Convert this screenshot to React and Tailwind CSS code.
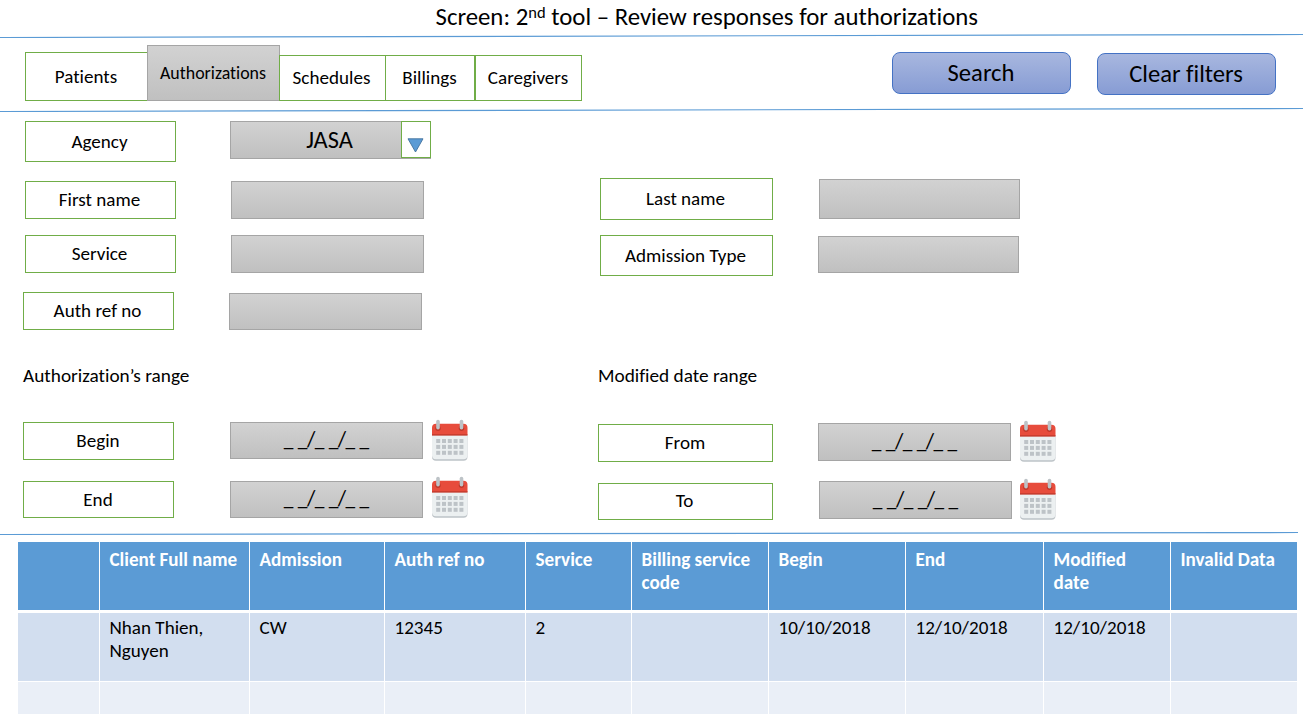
import React from 'react';

const Rule = ({ end = 1303, drop = 3 }) => (
  <svg className="block h-1 w-full shrink-0" viewBox="0 0 1303 4">
    <line x1="0" y1={0.5 + drop} x2={end} y2="0.5" stroke="#5b9bd5" strokeWidth="1.2" />
  </svg>
);

const Label = ({ className, children }) => (
  <div className={`flex items-center justify-center border border-[#70ad47] bg-white pb-px ${className}`}>{children}</div>
);

const Field = ({ className, children }) => (
  <div
    className={`flex items-center justify-center border border-[#a5a5a5] bg-linear-to-b from-[#d2d2d2] to-[#c0c0c0] ${className}`}
  >
    {children}
  </div>
);

const Slash = () => <span className="-mx-[0.5px] text-[21.5px] leading-none">/</span>;

const DateField = ({ className }) => (
  <Field className={className}>
    <span className="whitespace-pre text-[19.3px]">
      _ _<Slash />_ _<Slash />_ _
    </span>
  </Field>
);

const Calendar = ({ className }) => (
  <svg className={`block h-[42px] w-9 ${className}`} viewBox="0 0 36 42">
    <g transform="translate(0 0.5)">
      <path d="M0 16h35.500v21.300a4 4 0 0 1-4 4H4a4 4 0 0 1-4-4z" fill="#bdc3c7" />
      <path d="M0 16h35.500v19.700a4 4 0 0 1-4 4H4a4 4 0 0 1-4-4z" fill="#ecf0f1" />
      <path d="M0 15.800V8.300a4 4 0 0 1 4-4h27.500a4 4 0 0 1 4 4v7.500z" fill="#e74c3c" />
      <path d="M0 14.800h35.500v1.200H0z" fill="#c0392b" />
      <circle cx="6" cy="8.700" r="2.700" fill="#c0392b" />
      <circle cx="29.500" cy="8.700" r="2.700" fill="#c0392b" />
      <rect x="4.200" y="0.300" width="3.600" height="9.700" rx="1.800" fill="#bdc3c7" />
      <rect x="27.700" y="0.300" width="3.600" height="9.700" rx="1.800" fill="#bdc3c7" />
      {[19.5, 25.4, 31.3].map((y) =>
        [4.2, 10, 15.8, 21.6, 27.4].map((x) => (
          <rect key={`${x}-${y}`} x={x} y={y} width="4" height="4" fill="#bdc3c7" />
        ))
      )}
    </g>
  </svg>
);

const ActionButton = ({ className, children }) => (
  <button
    className={`flex h-[42px] w-[179px] items-center justify-center rounded-lg border border-[#4472c4] bg-linear-to-b from-[#a8b7df] to-[#879cd4] pr-px text-[24.6px] ${className}`}
  >
    {children}
  </button>
);

const headers = ['', 'Client Full name', 'Admission', 'Auth ref no', 'Service', 'Billing service code', 'Begin', 'End', 'Modified date', 'Invalid Data'];
const record = ['', 'Nhan Thien, Nguyen', 'CW', '12345', '2', '', '10/10/2018', '12/10/2018', '12/10/2018', ''];
const columns = 'grid grid-cols-[81px_149px_134px_140px_105px_136px_136px_137px_126px_126px] gap-x-px';

export default function App() {
  return (
    <div className="flex h-[725px] w-[1303px] flex-col overflow-hidden bg-white font-['Carlito','Calibri','Lato',sans-serif] text-[19.1px] leading-[23px] text-black [font-variant-ligatures:none]">
      <h1 className="h-[34px] shrink-0 pl-[435.500px] whitespace-nowrap text-[24.8px] leading-[34px]">
        Screen: 2<sup className="top-[-7px] text-[16.5px] leading-none">nd</sup> tool – Review responses for authorizations
      </h1>
      <Rule />

      <div className="flex h-[70px] shrink-0 items-start justify-between pr-[27px] pl-[25px]">
        <nav className="flex h-[63px] items-end">
          <Label className="h-[49px] w-[122px] border-r-0 pr-px">Patients</Label>
          <Field className="h-14 w-[133px] pr-px text-[17.9px]">Authorizations</Field>
          <Label className="-ml-px h-[46px] w-[107px] pr-0.5">Schedules</Label>
          <Label className="h-[46px] w-[89px] border-l-0 pr-px">Billings</Label>
          <Label className="h-[46px] w-[107px] pr-px">Caregivers</Label>
        </nav>
        <div className="flex gap-[26px] pt-3.5">
          <ActionButton>Search</ActionButton>
          <ActionButton className="mt-px">Clear filters</ActionButton>
        </div>
      </div>
      <Rule />

      <div className="grid h-[420px] shrink-0 grid-cols-[206px_203px_166px_220px_202px_1fr] grid-rows-[57px_57px_57px_74px_54px_59px_1fr] items-start pt-[9px] pl-[23px]">
        <Label className="ml-0.5 h-[41px] w-[151px] pr-0.5">Agency</Label>
        <div className="ml-px flex">
          <Field className="h-[38px] w-[171px] border-r-0 pl-[27px] text-[24.4px]">JASA</Field>
          <div className="flex h-[38px] w-[30px] border-b border-[#a5a5a5]">
            <div className="flex w-full items-end justify-center border border-[#70ad47] bg-white pr-px pb-1">
              <svg className="block h-[15px] w-[17px]" viewBox="0 0 17 15">
                <path d="M1 0.800h15L8.500 14z" fill="#5b9bd5" stroke="#41719c" strokeWidth="0.900" />
              </svg>
            </div>
          </div>
        </div>
        <div className="col-span-4" />

        <Label className="mt-[3px] ml-0.5 h-[38px] w-[151px] pr-0.5">First name</Label>
        <Field className="mt-[3px] ml-0.5 h-[38px] w-[193px]" />
        <div />
        <Label className="ml-0.5 h-[42px] w-[173px] pr-0.5">Last name</Label>
        <Field className="mt-px ml-px h-10 w-[201px]" />
        <div />

        <Label className="ml-0.5 h-[38px] w-[151px] pr-0.5">Service</Label>
        <Field className="ml-0.5 h-[38px] w-[193px]" />
        <div />
        <Label className="ml-0.5 h-[41px] w-[173px] pr-0.5">Admission Type</Label>
        <Field className="mt-px h-[37px] w-[201px]" />
        <div />

        <Label className="h-[38px] w-[151px] pr-0.5">Auth ref no</Label>
        <Field className="mt-px h-[37px] w-[193px]" />
        <div className="col-span-4" />

        <h2 className="col-span-3 -mt-0.5 text-[19.3px]">Authorization’s range</h2>
        <h2 className="col-span-3 -mt-0.5 text-[19.3px]">Modified date range</h2>

        <Label className="mt-0.5 h-[38px] w-[151px] pr-px">Begin</Label>
        <DateField className="mt-0.5 ml-px h-[37px] w-[193px]" />
        <Calendar className="-mt-px" />
        <Label className="mt-1 h-[38px] w-[175px] pr-px">From</Label>
        <DateField className="mt-[3px] h-[38px] w-[193px]" />
        <Calendar />

        <Label className="mt-0.5 h-[37px] w-[151px] pr-px">End</Label>
        <DateField className="mt-0.5 ml-px h-[37px] w-[193px]" />
        <Calendar className="-mt-[3px]" />
        <Label className="mt-1 h-[37px] w-[175px] pr-0.5">
          <span className="pb-0.5">To</span>
        </Label>
        <DateField className="mt-0.5 ml-px h-[38px] w-[193px]" />
        <Calendar className="-mt-px" />
      </div>
      <Rule end={1298} drop={2} />

      <div className="flex flex-col pt-1.5 pl-[18px]">
        <div className={`${columns} h-[68px] font-bold text-white`}>
          {headers.map((text, i) => (
            <div key={i} className="bg-[#5b9bd5] pt-1.5 pr-2 pl-[9.500px]">{text}</div>
          ))}
        </div>
        <div className={`${columns} mt-[3px] h-[68px]`}>
          {record.map((text, i) => (
            <div key={i} className="bg-[#d2deef] pt-[3px] pr-2 pl-[9.500px]">{text}</div>
          ))}
        </div>
        <div className={`${columns} mt-px h-8`}>
          {headers.map((_, i) => (
            <div key={i} className="bg-[#eaeff7]" />
          ))}
        </div>
      </div>
    </div>
  );
}
